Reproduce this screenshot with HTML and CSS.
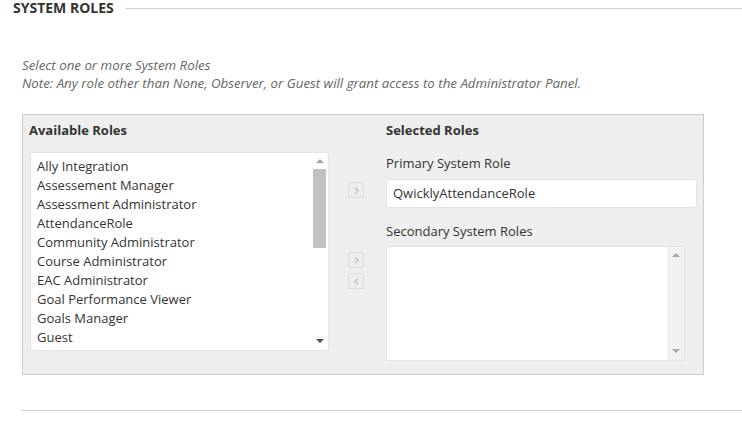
FILE: index.html
```html
<!DOCTYPE html>
<html>
<head>
<meta charset="utf-8">
<link rel="stylesheet" href="styles.css">
</head>
<body>
<div class="page">
  <div class="section-head">
    <h2 class="section-title">SYSTEM ROLES</h2>
    <div class="rule"></div>
  </div>
  <div class="instructions">
    <p>Select one or more System Roles</p>
    <p>Note: Any role other than None, Observer, or Guest will grant access to the Administrator Panel.</p>
  </div>
  <div class="panel">
    <div class="col-left">
      <div class="col-title">Available Roles</div>
      <div class="listbox avail">
        <ul class="items">
          <li>Ally Integration</li>
          <li>Assessement Manager</li>
          <li>Assessment Administrator</li>
          <li>AttendanceRole</li>
          <li>Community Administrator</li>
          <li>Course Administrator</li>
          <li>EAC Administrator</li>
          <li>Goal Performance Viewer</li>
          <li>Goals Manager</li>
          <li>Guest</li>
        </ul>
        <div class="sbar">
          <span class="arr up"></span>
          <div class="thumb"></div>
          <div class="track-rest"></div>
          <span class="arr down dark"></span>
        </div>
      </div>
    </div>
    <div class="col-mid">
      <div class="btn one"><svg width="7" height="9" viewBox="0 0 7 9"><path d="M2 1.5 L5 4.5 L2 7.5" fill="none" stroke="#c4c4c4" stroke-width="1.6"/></svg></div>
      <div class="btn-pair">
        <div class="btn"><svg width="7" height="9" viewBox="0 0 7 9"><path d="M2 1.5 L5 4.5 L2 7.5" fill="none" stroke="#c4c4c4" stroke-width="1.6"/></svg></div>
        <div class="btn"><svg width="7" height="9" viewBox="0 0 7 9"><path d="M5 1.5 L2 4.5 L5 7.5" fill="none" stroke="#c4c4c4" stroke-width="1.6"/></svg></div>
      </div>
    </div>
    <div class="col-right">
      <div class="col-title">Selected Roles</div>
      <div class="field-label">Primary System Role</div>
      <div class="textbox">QwicklyAttendanceRole</div>
      <div class="field-label second">Secondary System Roles</div>
      <div class="listbox sec">
        <div class="items empty"></div>
        <div class="sbar light">
          <span class="arr up"></span>
          <div class="track-rest"></div>
          <span class="arr down"></span>
        </div>
      </div>
    </div>
  </div>
  <div class="bottom-rule"></div>
</div>
</body>
</html>
```

FILE: styles.css
```css
* { box-sizing: border-box; }
html, body { margin: 0; padding: 0; background: #fff; }
body { font-family: "Open Sans", "DejaVu Sans", sans-serif; color: #333; }
.page { width: 742px; height: 421px; overflow: hidden; }

.section-head { display: flex; align-items: center; height: 16px; padding-left: 13px; }
.section-title { margin: 0; font-size: 14px; font-weight: 700; color: #333; line-height: 16px; }
.rule { flex: 1; height: 1px; background: #cfcfcf; margin-left: 12px; margin-top: 1px; }

.instructions { padding: 40px 0 0 22px; font-style: italic; font-size: 13.3px; color: #666; line-height: 18px; }
.instructions p { margin: 0; }

.panel { margin: 22px 0 0 22px; width: 682px; height: 261px; background: #eee; border: 1px solid #ccc; display: flex; padding: 6px 7px 0 6px; }

.col-title { font-size: 13px; font-weight: 700; color: #333; line-height: 18px; }

.col-left { width: 299px; display: flex; flex-direction: column; }
.listbox { background: #fff; border: 1px solid #e3e3e3; border-radius: 3px; display: flex; overflow: hidden; }
.avail { margin: 13px 0 0 1px; width: 299px; height: 199px; }
.items { list-style: none; margin: 0; padding: 4px 0 0 6px; flex: 1; font-size: 13px; line-height: 19px; color: #333; }
.items li { white-space: nowrap; }

.sbar { width: 15px; display: flex; flex-direction: column; align-items: center; margin-right: 1px; background: #fff; }
.sbar .thumb { width: 13px; height: 79px; background: #c1c1c1; }
.sbar .track-rest { flex: 1; }
.arr { display: block; width: 0; height: 0; border-left: 4px solid transparent; border-right: 4px solid transparent; }
.arr.up { border-bottom: 4px solid #a6a6a6; margin: 6px 0 6px; }
.arr.down { border-top: 4px solid #a6a6a6; margin: 0 0 7px; }
.arr.down.dark { border-top-color: #505050; }

.col-mid { width: 58px; display: flex; flex-direction: column; padding: 61px 0 0 20px; }
.btn { width: 16px; height: 16px; border: 1px solid #dcdcdc; border-radius: 2px; background: #ececec; display: flex; align-items: center; justify-content: center; }
.btn-pair { display: flex; flex-direction: column; gap: 5px; margin-top: 54px; }

.col-right { width: 310px; display: flex; flex-direction: column; }
.field-label { font-size: 13px; line-height: 18px; color: #333; margin-top: 15px; }
.field-label.second { margin-top: 14px; }
.textbox { margin-top: 7px; height: 29px; width: 311px; background: #fff; border: 1px solid #e3e3e3; border-radius: 3px; font-size: 13px; line-height: 27px; padding-left: 6px; color: #333; }
.sec { margin-top: 6px; width: 299px; height: 115px; }
.items.empty { padding: 0; }
.sbar.light { width: 17px; margin-right: 0; background: #f1f1f1; }
.sbar.light .arr.up { margin: 6px 0 0; }
.sbar.light .arr.down { margin-bottom: 7px; }

.bottom-rule { margin: 35px 0 0 22px; height: 1px; background: #cfcfcf; }
```
